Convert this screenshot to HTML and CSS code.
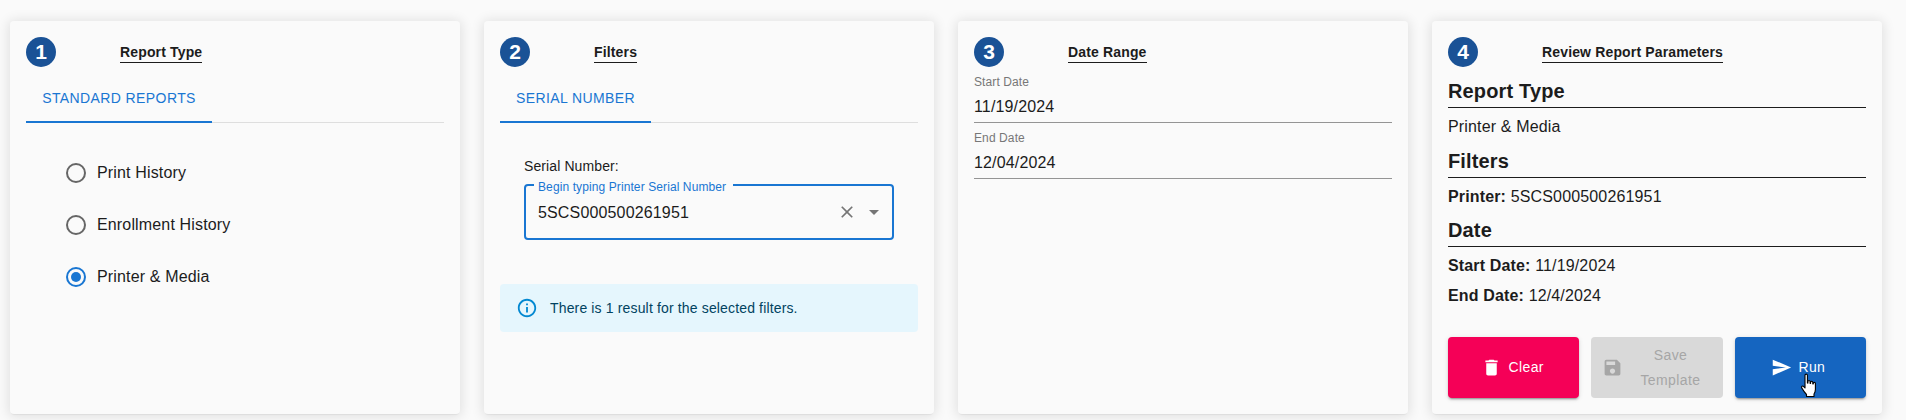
FILE: index.html
```html
<!DOCTYPE html>
<html lang="en">
<head>
<meta charset="utf-8">
<title>Report Builder</title>
<link rel="stylesheet" href="styles.css">
</head>
<body>
<main class="steps">
  <section class="card">
    <header class="head"><span class="num">1</span><h2 class="title">Report Type</h2></header>
    <div class="tabs"><span class="tab tab-standard">STANDARD REPORTS</span></div>
    <ul class="radios">
      <li class="radio-row"><span class="radio"></span>Print History</li>
      <li class="radio-row"><span class="radio"></span>Enrollment History</li>
      <li class="radio-row"><span class="radio radio-on"></span>Printer &amp; Media</li>
    </ul>
  </section>

  <section class="card">
    <header class="head"><span class="num">2</span><h2 class="title">Filters</h2></header>
    <div class="tabs"><span class="tab tab-serial">SERIAL NUMBER</span></div>
    <div class="filter">
      <div class="filter-label">Serial Number:</div>
      <div class="field">
        <span class="legend">Begin typing Printer Serial Number</span>
        <span class="field-value">5SCS000500261951</span>
        <svg class="ico-clear" viewBox="0 0 24 24"><path d="M19 6.41 17.59 5 12 10.59 6.41 5 5 6.41 10.59 12 5 17.59 6.41 19 12 13.41 17.59 19 19 17.59 13.41 12z"/></svg>
        <svg class="ico-drop" viewBox="0 0 24 24"><path d="M7 10l5 5 5-5z"/></svg>
      </div>
    </div>
    <div class="alert">
      <svg class="ico-info" viewBox="0 0 24 24"><path d="M11 7h2v2h-2zm0 4h2v6h-2zm1-9C6.48 2 2 6.48 2 12s4.48 10 10 10 10-4.48 10-10S17.52 2 12 2zm0 18c-4.41 0-8-3.59-8-8s3.59-8 8-8 8 3.59 8 8-3.59 8-8 8z"/></svg>
      <span>There is 1 result for the selected filters.</span>
    </div>
  </section>

  <section class="card">
    <header class="head head-tight"><span class="num">3</span><h2 class="title">Date Range</h2></header>
    <div class="date"><div class="date-label">Start Date</div><div class="date-value">11/19/2024</div></div>
    <div class="date"><div class="date-label">End Date</div><div class="date-value">12/04/2024</div></div>
  </section>

  <section class="card card-review">
    <header class="head head-review"><span class="num">4</span><h2 class="title">Review Report Parameters</h2></header>
    <h3 class="sub">Report Type</h3>
    <p class="line">Printer &amp; Media</p>
    <h3 class="sub">Filters</h3>
    <p class="line"><b>Printer:</b> 5SCS000500261951</p>
    <h3 class="sub sub-date">Date</h3>
    <p class="line"><b>Start Date:</b> 11/19/2024</p>
    <p class="line line-close"><b>End Date:</b> 12/4/2024</p>
    <div class="actions">
      <button class="btn btn-clear" type="button">
        <svg class="btn-ico" viewBox="0 0 24 24"><path d="M6 19c0 1.1.9 2 2 2h8c1.1 0 2-.9 2-2V7H6v12zM19 4h-3.5l-1-1h-5l-1 1H5v2h14V4z"/></svg>Clear
      </button>
      <button class="btn btn-save" type="button" disabled>
        <svg class="btn-ico" viewBox="0 0 24 24"><path d="M17 3H5c-1.11 0-2 .9-2 2v14c0 1.1.89 2 2 2h14c1.1 0 2-.9 2-2V7l-4-4zm-5 16c-1.66 0-3-1.34-3-3s1.34-3 3-3 3 1.34 3 3-1.34 3-3 3zm3-10H5V5h10v4z"/></svg><span class="save-text">Save Template</span>
      </button>
      <button class="btn btn-run" type="button">
        <svg class="btn-ico" viewBox="0 0 24 24"><path d="M2.01 21 23 12 2.01 3 2 10l15 2-15 2z"/></svg>Run
      </button>
      <svg class="hand" viewBox="0 0 20 26"><path d="M6 2.2c0-1.5 2.400-1.500 2.400 0V10l.5.1V8.400c0-1.300 2.200-1.300 2.200 0v2l.5.1V9.200c0-1.300 2.200-1.300 2.200 0v1.700l.5.1v-.7c0-1.300 2.100-1.300 2.100 0v6.200c0 2-.6 3.200-1.400 4.500v2.500H7.500v-2c-1.500-1.500-3-3.500-4.800-6.600-.8-1.400 1-2.500 2-1.300L6 15z" fill="#fff" stroke="#000" stroke-width="1.100" stroke-linejoin="round"/></svg>
    </div>
  </section>
</main>
</body>
</html>
```
FILE: styles.css
```css
* { box-sizing: border-box; }
html, body { margin: 0; height: 100%; }
body {
  background: #fafafa;
  color: #1c1c1c;
  font-family: "Liberation Sans", Arial, sans-serif;
  overflow: hidden;
}
.steps {
  display: grid;
  grid-template-columns: repeat(4, 450px);
  gap: 24px;
  padding: 21px 0 0 10px;
}
.card {
  position: relative;
  height: 393px;
  padding: 16px;
  background: #fafafa;
  border-radius: 4px;
  box-shadow: 0 2px 1px -1px rgba(0,0,0,.05), 0 1px 12px 2px rgba(0,0,0,.1);
}
.head { display: flex; align-items: flex-start; height: 30px; margin-bottom: 8px; }
.head-tight { margin-bottom: 0; }
.head-review { margin-bottom: 7px; }
.num {
  flex: none;
  width: 30px; height: 30px;
  border-radius: 50%;
  background: #1a5296;
  color: #fff;
  font-size: 21px;
  font-weight: 700;
  line-height: 30px;
  text-align: center;
}
.title {
  margin: 7px 0 0 64px;
  padding-bottom: 2px;
  border-bottom: 1px solid #1c1c1c;
  font-size: 14px;
  font-weight: 700;
  line-height: 16px;
  height: 19px;
  letter-spacing: .15px;
}
.tabs { height: 48px; border-bottom: 1px solid #dedede; display: flex; }
.tab {
  height: 48px;
  border-bottom: 2px solid #1976d2;
  color: #1976d2;
  font-size: 14px;
  line-height: 46px;
  text-align: center;
  letter-spacing: .4px;
}
.tab-standard { width: 186px; }
.tab-serial { width: 151px; }
.radios { list-style: none; margin: 24px 0 0; padding: 0 0 0 40px; }
.radio-row { display: flex; align-items: center; gap: 11px; height: 52px; font-size: 16px; letter-spacing: .15px; }
.radio {
  width: 20px; height: 20px;
  border: 2px solid #666;
  border-radius: 50%;
}
.radio-on { border-color: #1976d2; position: relative; }
.radio-on::after {
  content: "";
  position: absolute;
  inset: 3px;
  border-radius: 50%;
  background: #1976d2;
}
.filter { padding: 35px 24px 0; }
.filter-label { font-size: 14px; line-height: 16px; letter-spacing: .1px; }
.field {
  position: relative;
  display: flex;
  align-items: center;
  height: 56px;
  margin-top: 10px;
  padding: 0 12px;
  border: 2px solid #1976d2;
  border-radius: 4px;
}
.legend {
  position: absolute;
  left: 8px;
  top: -6px;
  padding: 0 7px 0 4px;
  background: #fafafa;
  color: #1976d2;
  font-size: 12px;
  line-height: 14px;
  letter-spacing: .1px;
}
.field-value { flex: 1; padding-top: 2px; font-size: 16px; letter-spacing: .15px; }
.ico-clear { width: 20px; height: 20px; fill: #757575; margin-right: 5px; }
.ico-drop { width: 24px; height: 24px; fill: #757575; margin-right: -6px; }
.alert {
  display: flex;
  align-items: center;
  gap: 12px;
  height: 48px;
  margin-top: 44px;
  padding: 0 16px;
  background: #e5f6fd;
  border-radius: 4px;
  color: #014361;
  font-size: 14px;
  letter-spacing: .15px;
}
.ico-info { width: 22px; height: 22px; fill: #0288d1; }
.date { height: 56px; border-bottom: 1px solid #949494; }
.date-label { padding-top: 8px; height: 22px; color: #777; font-size: 12px; line-height: 14px; letter-spacing: .1px; }
.date-value { margin-top: 6px; font-size: 16px; line-height: 24px; letter-spacing: .15px; }
.sub {
  margin: 2px 0 0;
  height: 34px;
  border-bottom: 1px solid #1c1c1c;
  font-size: 20px;
  line-height: 35px;
  font-weight: 700;
  letter-spacing: .15px;
}
.head-review + .sub { margin-top: 0; }
.sub-date { margin-top: 1px; }
.line { margin: 4px 0 0; height: 30px; font-size: 16px; line-height: 30px; letter-spacing: .15px; }
.line-close { margin-top: 0; }
.line b { font-weight: 700; }
.actions {
  position: absolute;
  left: 16px; right: 16px; bottom: 16px;
  display: grid;
  grid-template-columns: repeat(3, 1fr);
  gap: 12px;
  height: 61px;
}
.btn {
  display: flex;
  align-items: center;
  justify-content: center;
  gap: 6px;
  padding: 0 2px 0 0;
  border: 0;
  border-radius: 4px;
  color: #fff;
  font-family: inherit;
  font-size: 14px;
  line-height: 25px;
  letter-spacing: .4px;
  box-shadow: 0 3px 1px -2px rgba(0,0,0,.2), 0 2px 2px rgba(0,0,0,.14), 0 1px 5px rgba(0,0,0,.12);
}
.btn-ico { width: 21px; height: 21px; fill: currentColor; flex: none; }
.btn-clear { background: #f50057; }
.btn-run { background: #1565c0; padding-right: 4px; }
.btn-save { background: #d9d9d9; color: #a6a6a6; box-shadow: none; gap: 8px; }
.save-text { width: 78px; text-align: center; }
.hand { position: absolute; left: 351px; top: 36px; width: 20px; height: 26px; }
```
